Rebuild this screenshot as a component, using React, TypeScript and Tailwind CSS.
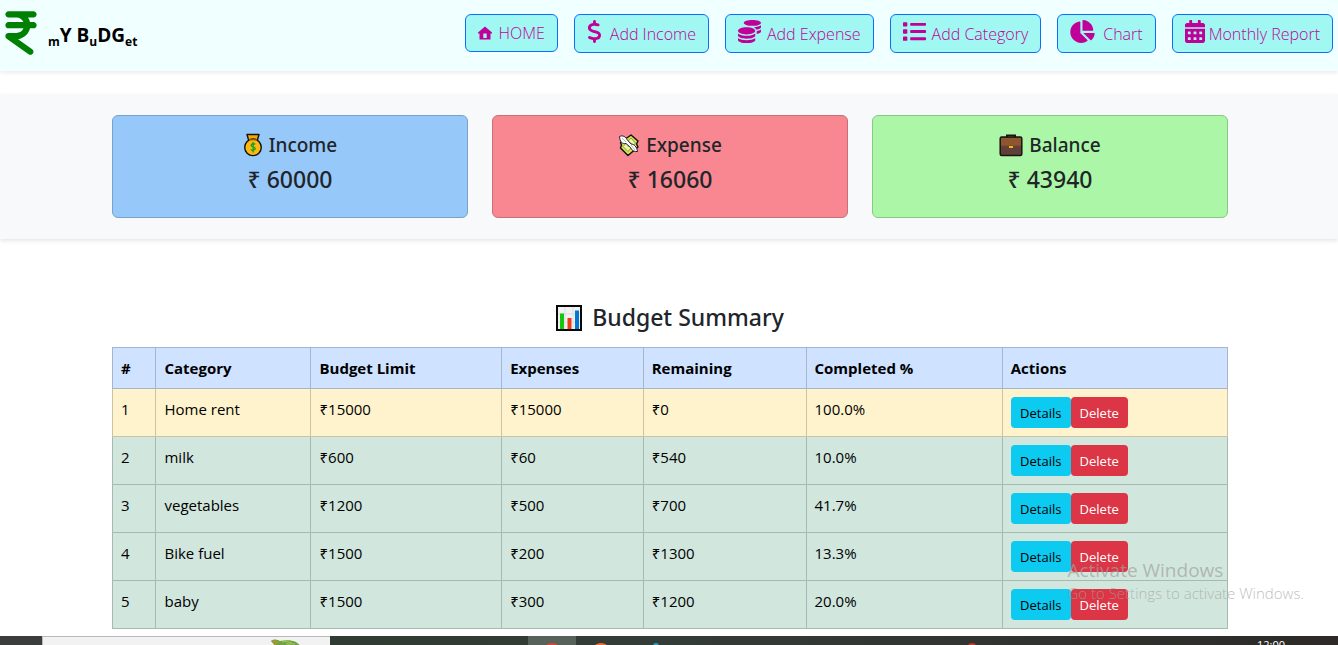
import React from "react";
import {
  FaCalendarAlt,
  FaChartPie,
  FaCoins,
  FaList,
} from "react-icons/fa";
import { FaDollarSign, FaIndianRupeeSign } from "react-icons/fa6";

function HomeIcon() {
  return (
    <svg viewBox="0 0 14 14" className="size-3.5" fill="currentColor" aria-hidden="true">
      <path
        fillRule="evenodd"
        d="M7 .5 14 6.500V7.500H12.500V13.500H1.500V7.500H0V6.500ZM5.300 7.500v4.500h3.400V7.500Z"
      />
    </svg>
  );
}

function MoneyBagIcon() {
  return (
    <svg viewBox="0 0 20 24" className="h-6 w-5" aria-hidden="true">
      <path d="M4 1.5h12l-1.6 5.6H5.6Z" fill="#f5a800" stroke="#111" strokeWidth="1.4" strokeLinejoin="round" />
      <circle cx="10" cy="14.3" r="8.3" fill="#fdb813" stroke="#111" strokeWidth="1.4" />
      <path d="M6 6.9h8" stroke="#b87400" strokeWidth="1.2" />
      <path d="M12.2 11.4c-.6-.9-4-1.1-4.1.9 0 1.9 4.1 1.3 4.1 3.3 0 2-3.6 1.9-4.300.7M10.100 9v10.500" fill="none" stroke="#16a020" strokeWidth="1.3" />
    </svg>
  );
}

function MoneyWingsIcon() {
  return (
    <svg viewBox="0 0 22 24" className="h-6 w-[22px]" aria-hidden="true">
      <path d="M13 2 20 8l-1.500 3L20 14 10 22.500 2.500 15l1-3-1-2.500Z" fill="#d3e64f" stroke="#111" strokeWidth="1.500" strokeLinejoin="round" />
      <path d="m13 5 4.500 5-7.500 8.500L5 13.500Z" fill="#edf3b8" stroke="#8b9c35" />
      <circle cx="11.500" cy="11.800" r="2.500" fill="#b9cc4d" />
      <path d="M1.500 3.500c3-1.500 6 0 7.500 3l4 4.500c3 0 6 3 6.500 7.500-3 .5-6-1-7-4L8 10.500C4 11 2 9 1.500 3.500Z" fill="#fff" stroke="#222" />
      <path d="m4 5 4 4M13 12l4 5" stroke="#b8b8b8" />
    </svg>
  );
}

function BriefcaseIcon() {
  return (
    <svg viewBox="0 0 24 24" className="size-6" aria-hidden="true">
      <path d="M8 5V2.500h8V5" fill="none" stroke="#1c1210" strokeWidth="2" />
      <rect x="1.200" y="4" width="21.600" height="18.500" rx="1.500" fill="#5d4037" stroke="#1c1210" strokeWidth="1.500" />
      <path d="M2 5h20v8H2Z" fill="#8e562e" />
      <path d="M2 13h20" stroke="#774626" />
      <rect x="10" y="13" width="4" height="2" fill="#f5b21b" />
    </svg>
  );
}

function BarChartIcon() {
  return (
    <svg viewBox="0 0 26 26" className="size-[26px]" aria-hidden="true">
      <rect x="1" y="1" width="24" height="24" fill="#f2f2f2" stroke="#080808" strokeWidth="2" />
      <path d="M9 2v22M17 2v22M2 9h22M2 17h22" stroke="#d9dde0" />
      <path d="M4 8.500h4V24H4Z" fill="#16c60c" />
      <path d="M11.500 13h4v11h-4Z" fill="#f03a17" />
      <path d="M19 5.500h4V24h-4Z" fill="#0078d7" />
    </svg>
  );
}

const navItems = [
  { label: "HOME", icon: <HomeIcon />, box: "h-[38px] gap-1.5" },
  { label: "Add Income", icon: <FaDollarSign className="h-[23px] w-[15px] -translate-y-0.5" />, box: "h-[39px] gap-2" },
  { label: "Add Expense", icon: <FaCoins className="size-[23px] -translate-y-0.5" />, box: "h-[39px] gap-1.5" },
  { label: "Add Category", icon: <FaList className="size-[23px] -translate-y-0.5" />, box: "h-[39px] gap-1.5" },
  { label: "Chart", icon: <FaChartPie className="h-[23px] w-[25px] -translate-y-0.5" />, box: "h-[39px] gap-2" },
  { label: "Monthly Report", icon: <FaCalendarAlt className="h-[23px] w-5 -translate-y-0.5" />, box: "h-[39px] gap-1" },
];

const totals = [
  { label: "Income", amount: "60000", icon: <MoneyBagIcon />, box: "border-[#79a2cb] bg-[#97c8fa]" },
  { label: "Expense", amount: "16060", icon: <MoneyWingsIcon />, box: "border-[#c96f77] bg-[#f88792]" },
  { label: "Balance", amount: "43940", icon: <BriefcaseIcon />, box: "border-[#8ac886] bg-[#abf7a7]" },
];

const columns = [
  { label: "#", width: "w-[3.9%]" },
  { label: "Category", width: "w-[13.9%]" },
  { label: "Budget Limit", width: "w-[17.1%]" },
  { label: "Expenses", width: "w-[12.7%]" },
  { label: "Remaining", width: "w-[14.6%]" },
  { label: "Completed %", width: "w-[17.6%]" },
  { label: "Actions", width: "w-[20.2%]" },
];

const rows = [
  ["1", "Home rent", "₹15000", "₹15000", "₹0", "100.0%"],
  ["2", "milk", "₹600", "₹60", "₹540", "10.0%"],
  ["3", "vegetables", "₹1200", "₹500", "₹700", "41.7%"],
  ["4", "Bike fuel", "₹1500", "₹200", "₹1300", "13.3%"],
  ["5", "baby", "₹1500", "₹300", "₹1200", "20.0%"],
];

function Header() {
  return (
    <header className="flex h-[71px] items-start justify-between bg-[#f0ffff] pr-[5px] pl-0.5 shadow-[0_2px_4px_rgba(0,0,0,0.075)]">
      <a href="#home" className="flex items-center pt-2 text-black">
        <FaIndianRupeeSign className="h-[50px] w-[38px] text-[#008000]" />
        <span className="pt-1 pl-2 text-[19px] leading-6 font-bold">
          <sub className="bottom-[-4px] text-[12px]">m</sub>Y B
          <sub className="bottom-[-4px] text-[12px]">u</sub>DG
          <sub className="bottom-[-4px] text-[12px]">et</sub>
        </span>
      </a>
      <nav className="flex items-start gap-4 pt-3.5">
        {navItems.map((item) => (
          <a
            key={item.label}
            href={"#" + item.label.toLowerCase().replace(" ", "-")}
            className={`flex items-center rounded-md border border-[#0d6efd] bg-[#a1f7f1] px-3 text-[16px] font-light whitespace-nowrap text-[#c00098] ${item.box}`}
          >
            {item.icon}
            <span>{item.label}</span>
          </a>
        ))}
      </nav>
    </header>
  );
}

function Totals() {
  return (
    <section className="mt-[23px] bg-[#f8f9fa] py-[21px] pl-0.5 shadow-[0_2px_4px_rgba(0,0,0,0.1)]">
      <div className="mx-auto grid max-w-[1116px] grid-cols-3 gap-6">
        {totals.map((item) => (
          <article key={item.label} className={`rounded-md border pt-[17px] pb-[22px] text-center font-['Noto_Sans',sans-serif] ${item.box}`}>
            <h2 className="flex h-6 items-center justify-center gap-1.5 text-[19px] font-medium">
              {item.icon}
              {item.label}
            </h2>
            <p className="mt-1.5 text-[23px] leading-8 font-medium">₹ {item.amount}</p>
          </article>
        ))}
      </div>
    </section>
  );
}

function Summary() {
  return (
    <main className="pt-16 pb-[7px] pl-0.5">
      <div className="mx-auto max-w-[1116px]">
        <h1 className="flex h-[29px] items-center justify-center gap-2.5 font-['Noto_Sans',sans-serif] text-[23px] font-medium">
          <BarChartIcon />
          Budget Summary
        </h1>
        <table className="mt-[15px] w-full table-fixed border-collapse text-left text-[15px] leading-6 text-black">
          <thead>
            <tr className="h-[41px] bg-[#cfe2ff]">
              {columns.map((column) => (
                <th key={column.label} scope="col" className={`border border-[#a6b5cc] px-2 font-bold ${column.width}`}>
                  {column.label}
                </th>
              ))}
            </tr>
          </thead>
          <tbody>
            {rows.map((row) => {
              const full = row[5] === "100.0%";
              const line = full ? "border-[#ccc2a4]" : "border-[#a7b9b1]";
              return (
                <tr key={row[0]} className={`h-12 ${full ? "bg-[#fff3cd]" : "bg-[#d1e7dd]"}`}>
                  {row.map((value, index) => (
                    <td key={index} className={`border px-2 pt-2 align-top ${line}`}>
                      {value}
                    </td>
                  ))}
                  <td className={`border px-2 pt-2 align-top ${line}`}>
                    <div className="flex">
                      <button type="button" className="h-[31px] w-[60px] rounded bg-[#0dcaf0] text-[13px] text-black">
                        Details
                      </button>
                      <button type="button" className="h-[31px] w-[57px] rounded bg-[#dc3545] text-[13px] text-white">
                        Delete
                      </button>
                    </div>
                  </td>
                </tr>
              );
            })}
          </tbody>
        </table>
      </div>
    </main>
  );
}

function Taskbar() {
  return (
    <footer className="mt-auto flex h-[9px] overflow-hidden bg-linear-to-r from-[#2b3b2d] via-[#343c37] to-[#2d2a28]">
      <div className="w-[42px] bg-[#3b3d3c]" />
      <div className="flex w-72 justify-end border-t border-l border-[#b8b8b8] bg-[#f2f2f2] pr-6">
        <svg viewBox="0 0 36 7" className="mt-0.5 h-[7px] w-9" aria-hidden="true">
          <path d="M1 2c4-3 7-1 9 0 5-1 12-1 16 1l5 4H6L4 4Z" fill="#6fa33d" />
          <path d="M1 2c3-2 6-1 8 1L5 7Z" fill="#9a9a3c" />
          <path d="M12 3c3-1 7 0 10 1M16 5h9" stroke="#a4cc62" fill="none" />
        </svg>
      </div>
      <div className="w-[198px]" />
      <div className="flex w-12 justify-center bg-[#57635a]">
        <svg viewBox="0 0 12 2" className="mt-[7px] h-0.5 w-3" aria-hidden="true">
          <ellipse cx="6" cy="3" rx="6" ry="3" fill="#d94436" />
        </svg>
      </div>
      <svg viewBox="0 0 400 2" className="mt-[7px] ml-4 h-0.5 w-[400px]" aria-hidden="true">
        <ellipse cx="9" cy="3" rx="6" ry="3" fill="#ee6a35" />
        <ellipse cx="64" cy="3" rx="3" ry="3" fill="#2d9bd0" />
        <ellipse cx="380" cy="3" rx="4" ry="3" fill="#c5372d" />
      </svg>
      <span className="mt-[3px] mr-[53px] ml-auto text-[11px] leading-3 text-white">12:00</span>
    </footer>
  );
}

export default function App() {
  return (
    <div className="relative flex min-h-screen flex-col bg-white font-['Open_Sans','Noto_Sans',sans-serif] text-[#212529]">
      <Header />
      <Totals />
      <Summary />
      <Taskbar />
      <aside className="pointer-events-none absolute right-[34px] bottom-[43px] text-[#a0a0a0]/70">
        <p className="text-[19px] leading-7">Activate Windows</p>
        <p className="text-[15px] leading-[18px] font-light">Go to Settings to activate Windows.</p>
      </aside>
    </div>
  );
}
